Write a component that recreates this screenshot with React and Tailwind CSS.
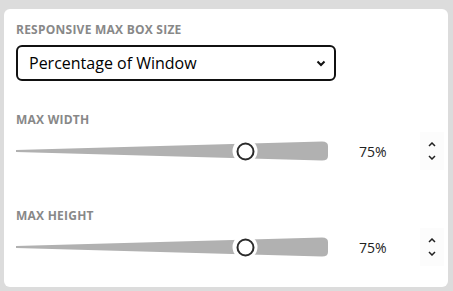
import React from 'react';

const Track = () => (
  <svg width="312" height="20" viewBox="0 0 312 20" className="block">
    <path d="M0 9 L306 0.5 Q312 0.5 312 5 L312 15 Q312 19.5 306 19.5 L0 11 Z" fill="#b1b1b1" />
  </svg>
);

const Spinner = () => (
  <div className="flex h-[38px] w-[24px] flex-col items-center justify-center gap-[8px] bg-[#fcfcfc]">
    <svg width="8" height="5" viewBox="0 0 8 5">
      <path d="M1 4 L4 1 L7 4" fill="none" stroke="#222" strokeWidth="1.5" />
    </svg>
    <svg width="8" height="5" viewBox="0 0 8 5">
      <path d="M1 1 L4 4 L7 1" fill="none" stroke="#222" strokeWidth="1.5" />
    </svg>
  </div>
);

const SliderRow = ({ value }) => (
  <div className="flex h-[22px] items-center">
    <div className="relative h-[20px] w-[312px]">
      <Track />
      <div
        className="absolute top-1/2 flex h-[25px] w-[25px] -translate-x-1/2 -translate-y-1/2 items-center justify-center rounded-full bg-white"
        style={{ left: `${(value / 100) * 304 + 1}px` }}>
        <div className="h-[18px] w-[18px] rounded-full border-2 border-[#2a2a2a] bg-white" />
      </div>
    </div>
    <div className="ml-[31px] w-[40px] text-[14px] text-[#222]">{value}%</div>
    <div className="ml-[21px]">
      <Spinner />
    </div>
  </div>
);

const Label = ({ children, className = '' }) => (
  <div
    className={`text-[12px] font-bold uppercase leading-[14px] tracking-[0.02em] text-[#888] ${className}`}>
    {children}
  </div>
);

export default function App() {
  return (
    <div
      className="h-[291px] w-[453px] overflow-hidden bg-[#dcdcdc] pl-[4px] pt-[9px]"
      style={{ fontFamily: '"Open Sans", Inter, sans-serif' }}>
      <div className="h-[278px] w-[444px] rounded-[6px] bg-white pl-[12px] pt-[14px]">
        <Label>Responsive Max Box Size</Label>
        <div className="mt-[8px] flex h-[36px] w-[320px] items-center justify-between rounded-[6px] border-2 border-[#111] pl-[11px] pr-[8px]">
          <span className="text-[16px] text-black">Percentage of Window</span>
          <svg width="10" height="7" viewBox="0 0 10 7">
            <path d="M1.5 1.5 L5 5 L8.5 1.5" fill="none" stroke="#111" strokeWidth="2" />
          </svg>
        </div>
        <Label className="mt-[32px]">Max Width</Label>
        <div className="mt-[13px]">
          <SliderRow value={75} />
        </div>
        <Label className="mt-[47px]">Max Height</Label>
        <div className="mt-[13px]">
          <SliderRow value={75} />
        </div>
      </div>
    </div>
  );
}
